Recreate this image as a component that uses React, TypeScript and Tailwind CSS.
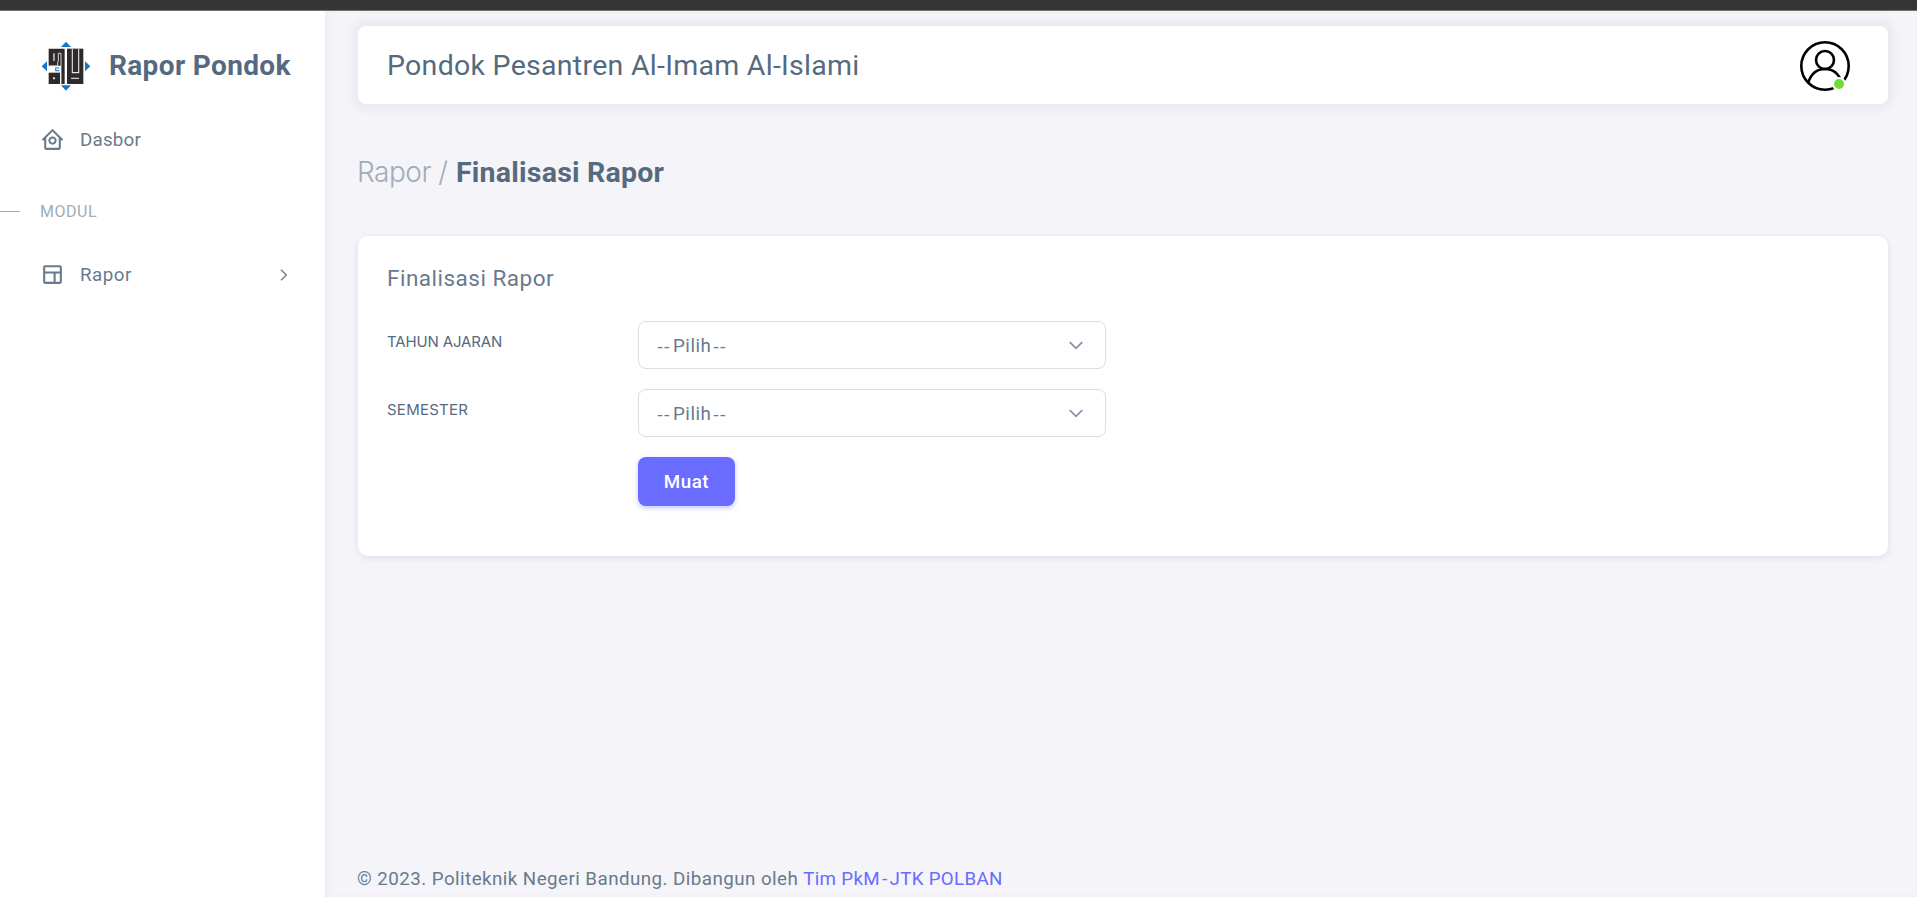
import { BiHomeCircle, BiLayout } from "react-icons/bi";

function Logo() {
  return (
    <svg viewBox="123 122 150 150" className="h-[50px] w-[50px] shrink-0">
      <g fill="#1574c4">
        <path d="M198 124l15 16h-30z" />
        <path d="M198 271l15-16h-30z" />
        <path d="M125 198l16-15v30z" />
        <path d="M271 198l-16-15v30z" />
      </g>
      <path d="M146 145h48v106h-11v-55h-37z" fill="#2d2a2c" />
      <path d="M146 217h34v34h-34z" fill="#2d2a2c" />
      <path d="M201 145h49v106h-49z" fill="#2d2a2c" />
      <g fill="none" stroke="#e4e0dc" strokeWidth="2.8">
        <path d="M162 159v23" strokeWidth="4" />
        <path d="M175 184v-25h8v92" />
        <path d="M149 197h24v-13" />
        <path d="M159 234h6" strokeWidth="6" />
        <path d="M217 145v72h19v-72" strokeWidth="3.4" />
        <path d="M213 234h24" strokeWidth="3.4" />
      </g>
      <path d="M178 203h-11v8h11" fill="none" stroke="#2a86d6" strokeWidth="3.5" />
    </svg>
  );
}

function Sidebar() {
  return (
    <aside className="flex w-[325px] shrink-0 flex-col bg-white text-[18.75px] text-[#697a8d]">
      <div className="flex h-[104px] items-center pt-[6px] pl-[41px]">
        <Logo />
        <span className="ml-[18px] text-[28px] font-bold tracking-[0.35px] whitespace-nowrap text-[#566a7f]">
          Rapor Pondok
        </span>
      </div>
      <a className="flex h-[48px] items-center pl-10">
        <BiHomeCircle className="mr-[15px] h-[25px] w-[25px]" />
        <span className="pt-[2px] tracking-[0.22px]">Dasbor</span>
      </a>
      <div className="mt-[25px] flex h-[46px] items-center text-[#a1acb8]">
        <span className="h-px w-5 bg-[#a1acb8]" />
        <span className="ml-5 pt-[2px] text-[16px] tracking-[0.54px]">MODUL</span>
      </div>
      <a className="mt-[16px] flex h-[48px] items-center pl-10">
        <BiLayout className="mr-[15px] h-[25px] w-[25px]" />
        <span className="flex-1 pt-[2px] tracking-[0.5px]">Rapor</span>
        <svg viewBox="0 0 8 12" className="mt-px mr-[37px] h-3 w-2" fill="none" stroke="currentColor" strokeWidth="1.3">
          <path d="M1 .8L6.400 6 1 11.2" />
        </svg>
      </a>
    </aside>
  );
}

function Avatar() {
  return (
    <div className="relative mt-[2px] h-[50px] w-[50px]">
      <svg viewBox="0 0 50 50" className="h-[50px] w-[50px]" fill="none" stroke="#000" strokeWidth="2.6">
        <circle cx="25" cy="25" r="23.7" />
        <circle cx="25" cy="19" r="9" />
        <path d="M8.3 41.5C11 33 17 28 25 28s14 5 16.7 13.5" />
      </svg>
      <span className="absolute right-[4px] bottom-0 h-[14px] w-[14px] rounded-full border-2 border-white bg-[#71dd37]" />
    </div>
  );
}

function SelectBox() {
  return (
    <div className="flex h-[48px] w-[468px] items-center justify-between rounded-[8px] border border-[#d9dee3] bg-white pr-[22px] pl-[18px] text-[18.75px] text-[#697a8d]">
      <span className="flex items-center pt-[2px]">
        <span className="w-[16px] font-['Open_Sans',sans-serif] tracking-[0.8px]">--</span>
        <span className="w-[38px] tracking-[0.5px]">Pilih</span>
        <span className="ml-[2px] font-['Open_Sans',sans-serif] tracking-[0.8px]">--</span>
      </span>
      <svg viewBox="0 0 14 9" className="h-[9px] w-[14px]" fill="none" stroke="#8592a3" strokeWidth="1.8">
        <path d="M.8 1.2L7 7.3l6.2-6.1" />
      </svg>
    </div>
  );
}

function Field({ label, spacing }: { label: string; spacing: string }) {
  return (
    <div className="mb-5 flex">
      <label className={`-ml-px w-[251px] pt-[9px] font-[Inter,sans-serif] text-[15px] leading-[23px] text-[#566a7f] ${spacing}`}>
        {label}
      </label>
      <SelectBox />
    </div>
  );
}

export default function App() {
  return (
    <div className="flex h-[897px] flex-col overflow-hidden bg-[#f4f4f9] font-[Roboto,sans-serif]">
      <div className="h-[11px] shrink-0 border-b border-[#777073] bg-[#353535]" />
      <div className="flex min-h-0 flex-1">
        <Sidebar />
        <main className="flex flex-1 flex-col pr-[29px] pl-[33px] shadow-[inset_3px_0_6px_rgba(161,172,184,0.08)]">
          <header className="mt-[15px] flex h-[78px] shrink-0 items-center justify-between rounded-[8px] bg-white pr-[38px] pl-[29px] shadow-[0_0_8px_5px_rgba(161,172,184,0.15)]">
            <h2 className="pt-[2px] text-[28.5px] tracking-[0.28px] text-[#566a7f]">
              Pondok Pesantren Al-Imam Al-Islami
            </h2>
            <Avatar />
          </header>
          <h1 className="mt-[49px] flex h-[38px] items-baseline text-[28.5px] leading-[38px] text-[#566a7f]">
            <span className="-ml-px w-[99px] font-[Inter,sans-serif] text-[28px] font-light tracking-[-0.5px] whitespace-nowrap text-[#a1acb8]">
              Rapor /
            </span>
            <span className="font-bold tracking-[0.22px]">Finalisasi Rapor</span>
          </h1>
          <section className="mt-[45px] h-[320px] rounded-[10px] bg-white px-[30px] pt-[27px] shadow-[0_2px_7px_rgba(67,89,113,0.12)]">
            <h3 className="-ml-px mb-[28px] h-[30px] text-[22.5px] leading-[30px] tracking-[0.49px] text-[#697a8d]">
              Finalisasi Rapor
            </h3>
            <Field label="TAHUN AJARAN" spacing="tracking-[-0.14px]" />
            <Field label="SEMESTER" spacing="tracking-[0.25px]" />
            <button className="ml-[250px] flex h-[49px] w-[97px] items-center justify-center rounded-[8px] bg-[#696cff] pt-[2px] text-[18.75px] font-medium tracking-[0.52px] text-white shadow-[0_2px_5px_rgba(105,108,255,0.4)]">
              Muat
            </button>
          </section>
          <footer className="mt-auto flex h-[38px] items-center pt-[2px] text-[18.75px] whitespace-nowrap text-[#697a8d]">
            <span className="-ml-px mr-[5px] tracking-[0.45px]">© 2023. Politeknik Negeri Bandung. Dibangun oleh</span>
            <a className="tracking-[0.32px] text-[#696cff]">
              Tim PkM<span className="[word-spacing:-3px]"> - </span>JTK POLBAN
            </a>
          </footer>
        </main>
      </div>
    </div>
  );
}
